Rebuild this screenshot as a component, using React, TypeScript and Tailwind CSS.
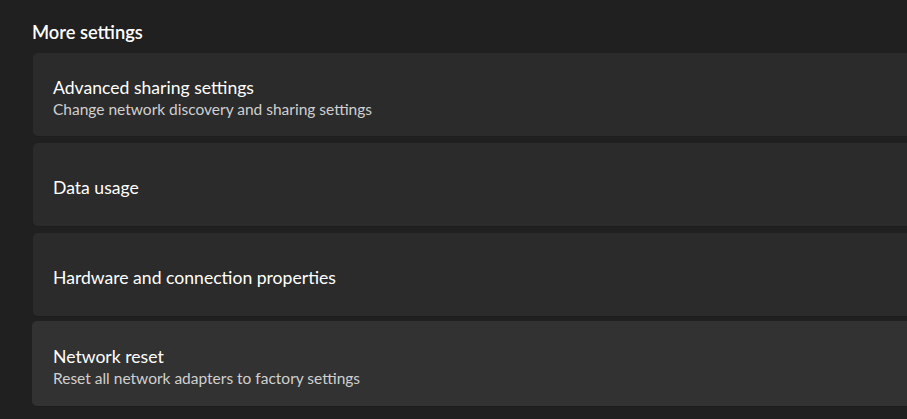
import React from "react";

const font = { fontFamily: "Lato, 'Noto Sans', sans-serif" };

function Card({
  title,
  subtitle,
  extra = "",
}: {
  title: string;
  subtitle?: string;
  extra?: string;
}) {
  return (
    <div
      className={
        "h-[84px] w-[900px] shrink-0 rounded-[5px] border-b border-[#1d1d1d] bg-[#2b2b2b] pl-[20px] " +
        (subtitle ? "pt-[24px] " : "pt-[34px] ") +
        extra
      }
    >
      <div className="text-[17.6px] leading-[22px] text-white">{title}</div>
      {subtitle && (
        <div className="text-[15.5px] leading-[20px] text-[#d0d0d0]">{subtitle}</div>
      )}
    </div>
  );
}

export default function App() {
  return (
    <div
      className="h-[419px] w-[907px] overflow-hidden bg-[#202020] pl-[33px]"
      style={font}
    >
      <div className="ml-[-1px] pt-[20px] text-[18.3px] font-semibold leading-[24px] text-white">
        More settings
      </div>
      <div className="mt-[9px] flex flex-col gap-[6px]">
        <Card
          title="Advanced sharing settings"
          subtitle="Change network discovery and sharing settings"
        />
        <Card title="Data usage" />
        <Card title="Hardware and connection properties" />
        <Card
          title="Network reset"
          subtitle="Reset all network adapters to factory settings"
          extra="!h-[86px] mt-[-2px] ml-[-1px] !bg-[#323232] !pl-[21px] !pt-[25px]"
        />
      </div>
    </div>
  );
}
